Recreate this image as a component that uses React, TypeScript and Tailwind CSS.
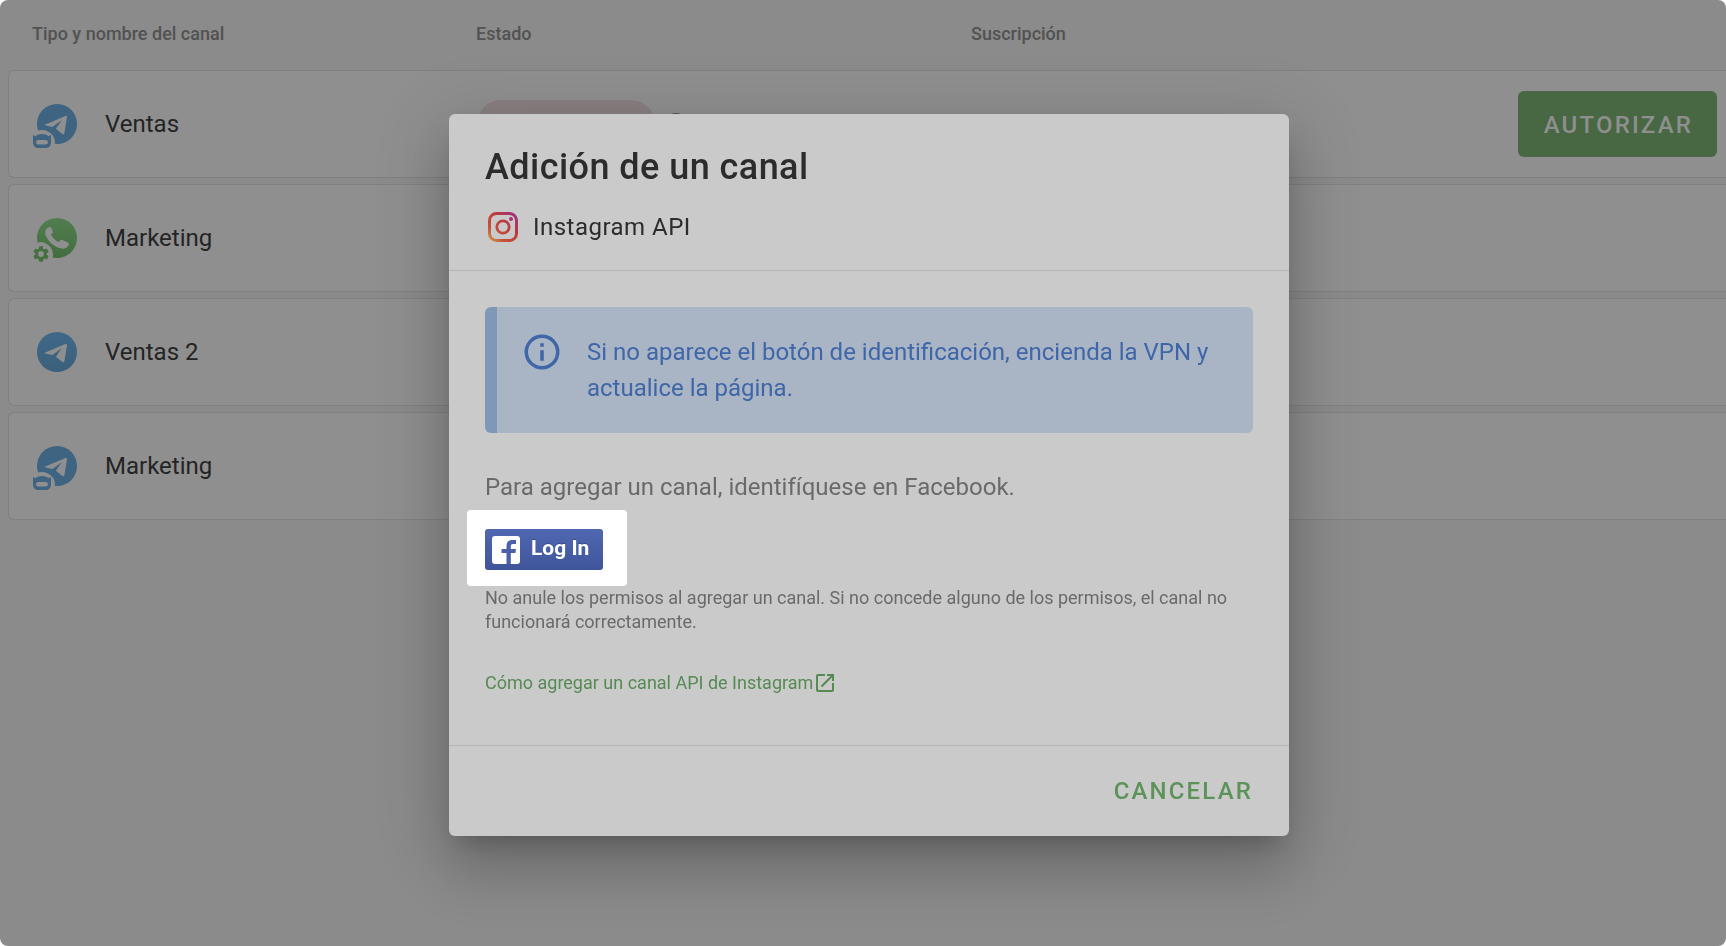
import React from "react";

const channels = [
  { name: "Ventas", icon: "telegram", badge: "bot" },
  { name: "Marketing", icon: "whatsapp", badge: "gear" },
  { name: "Ventas 2", icon: "telegram", badge: "" },
  { name: "Marketing", icon: "telegram", badge: "bot" },
];

function ChannelIcon({ icon, badge }: { icon: string; badge: string }) {
  const green = icon === "whatsapp";
  return (
    <svg className="h-12 w-12 shrink-0" viewBox="0 0 48 48" aria-hidden="true">
      <defs>
        <linearGradient id="tg" x1="0" y1="0" x2="0" y2="1">
          <stop offset="0" stopColor="#3f6888" />
          <stop offset="1" stopColor="#3c607b" />
        </linearGradient>
        <linearGradient id="wa" x1="0" y1="0" x2="0" y2="1">
          <stop offset="0" stopColor="#527d4f" />
          <stop offset="1" stopColor="#426e3f" />
        </linearGradient>
      </defs>
      <circle cx="25" cy="24" r="20" fill={green ? "url(#wa)" : badge ? "#3e6482" : "url(#tg)"} />
      {green ? (
        <path
          d="M16.5 13.4c1-.6 2.300-.5 2.800.7l1.400 3.300c.3.800.1 1.400-.5 2l-1.200 1.400c1.700 3.400 4.300 5.800 7.700 7.300l1.800-1.800c.5-.5 1.100-.6 1.800-.3l5.600 2.500c1.100.5 1.300 1.400.8 2.500-1.500 3.200-4.900 4.300-8.200 3.300-7-2.200-12.200-6.600-14.800-13.100-1.200-3.200-.6-5.800 2.800-7.800z"
          fill="#8f8f8f"
        />
      ) : (
        <path
          d="M13.300 24.500 33.500 16c1-.4 1.700.2 1.500 1.300l-2.600 15.800c-.2 1.300-1 1.600-2 .9l-6.500-5.200 5.800-8.500-9.400 6.700-6.800-1.600c-.8-.2-.9-.6-.2-.9z"
          fill="#8f8f8f"
        />
      )}
      {badge === "bot" && (
        <>
          <circle cx="10" cy="43" r="13" fill="#8f8f8f" />
          <path
            fillRule="evenodd"
            d="M1 35l2.500 1.300C6.500 33.300 13.500 33.300 16.500 36.300L19 35v7.500c0 3.500-2 5.500-6 5.500H7c-4 0-6-2-6-5.500zM6.300 40a2.300 2.300 0 0 0 0 4.600h7.400a2.300 2.300 0 0 0 0-4.600z"
            fill="#3e6482"
          />
        </>
      )}
      {badge === "gear" && (
        <>
          <circle cx="8" cy="41" r="13" fill="#8f8f8f" />
          <g transform="translate(-.6 30.400) scale(.8)" fill="#44703f">
            <path d="M19.140 12.940c.040-.3.060-.610.060-.940s-.020-.640-.070-.940l2.030-1.580c.18-.14.23-.41.12-.61l-1.920-3.320c-.12-.22-.37-.29-.59-.22l-2.390.96c-.5-.38-1.030-.7-1.620-.94l-.36-2.540c-.04-.24-.24-.41-.48-.41h-3.840c-.24 0-.43.17-.47.41l-.36 2.540c-.59.24-1.130.57-1.620.94l-2.390-.96c-.22-.08-.47 0-.59.22L2.740 8.870c-.12.21-.08.47.12.61l2.030 1.580c-.05.3-.09.63-.09.94s.02.64.07.94l-2.030 1.580c-.18.14-.23.41-.12.61l1.920 3.320c.12.22.37.29.59.22l2.390-.96c.5.38 1.030.7 1.620.94l.36 2.540c.05.24.24.41.48.41h3.840c.24 0 .44-.17.47-.41l.36-2.540c.59-.24 1.130-.56 1.620-.94l2.390.96c.22.08.47 0 .59-.22l1.920-3.320c.12-.22.07-.47-.12-.61zM12 15.600A3.600 3.600 0 1 1 12 8.400a3.600 3.600 0 0 1 0 7.200z" />
          </g>
        </>
      )}
    </svg>
  );
}

function InstagramIcon() {
  return (
    <svg className="h-9 w-9" viewBox="0 0 36 36" fill="none" aria-hidden="true">
      <defs>
        <linearGradient id="ig" x1="4" y1="33" x2="32" y2="3" gradientUnits="userSpaceOnUse">
          <stop stopColor="#c99d45" />
          <stop offset=".28" stopColor="#c5503a" />
          <stop offset=".6" stopColor="#bd3c3d" />
          <stop offset="1" stopColor="#97308a" />
        </linearGradient>
      </defs>
      <rect x="4.500" y="4.500" width="27" height="27" rx="7" stroke="url(#ig)" strokeWidth="3" />
      <circle cx="18" cy="18" r="6.200" stroke="url(#ig)" strokeWidth="2.800" />
      <circle cx="26" cy="10" r="2" fill="#a8326c" />
    </svg>
  );
}

function FacebookLogin() {
  return (
    <button
      type="button"
      className="flex h-[41px] w-[118px] items-center gap-2.5 rounded-[3px] bg-linear-to-b from-[#5068b2] to-[#3f549a] pl-1.5 text-[21px] font-bold text-white"
    >
      <svg className="h-[30px] w-[30px]" viewBox="0 0 30 30" aria-hidden="true">
        <rect x="1" y="1" width="28" height="28" rx="3" fill="#fff" />
        <path
          d="M15.500 29V18h-5v-4h5v-3c0-4 2-6 6-6H25v4h-3c-1.500 0-2.200.8-2.200 2.200V14H25l-.6 4h-4.600v11z"
          fill="#4a60a8"
        />
      </svg>
      <span className="pb-0.5 [text-shadow:0_-1px_0_#354c8c]">Log In</span>
    </button>
  );
}

function AddChannelDialog() {
  return (
    <div
      role="dialog"
      aria-labelledby="dialog-title"
      className="w-[840px] max-w-full rounded-md bg-[#cacaca] text-[#2c2c2c] shadow-[0_16px_23px_-10px_rgba(0,0,0,0.2),0_36px_57px_4px_rgba(0,0,0,0.14),0_13px_69px_12px_rgba(0,0,0,0.12)]"
    >
      <header className="border-b border-[#b5b5b5] px-9 pt-8 pb-[25px]">
        <h2 id="dialog-title" className="text-4xl leading-[42px] font-medium tracking-[0.0125em]">
          Adición de un canal
        </h2>
        <div className="mt-[21px] flex items-center gap-3">
          <InstagramIcon />
          <span className="text-2xl tracking-[0.02em]">Instagram API</span>
        </div>
      </header>

      <div className="px-9 pt-9 pb-[50px] text-[#6a6a6a]">
        <div className="flex gap-6 rounded-md border-l-12 border-[#8098b8] bg-[#a9b5c4] p-6 text-[#3e66a8]">
          <svg className="h-[42px] w-[42px] shrink-0" viewBox="0 0 24 24" fill="currentColor" aria-hidden="true">
            <path d="M11 9h2V7h-2m1 13c-4.410 0-8-3.590-8-8s3.590-8 8-8 8 3.590 8 8-3.590 8-8 8m0-18A10 10 0 0 0 2 12a10 10 0 0 0 10 10 10 10 0 0 0 10-10A10 10 0 0 0 12 2m-1 15h2v-6h-2v6z" />
          </svg>
          <p className="py-[3px] text-2xl leading-9">
            Si no aparece el botón de identificación, encienda la VPN y actualice la página.
          </p>
        </div>
        <p className="mt-9 text-2xl leading-9">Para agregar un canal, identifíquese en Facebook.</p>
        <div className="mt-[5px] -ml-[18px] w-fit rounded bg-white pt-[19px] pr-6 pb-4 pl-[18px]">
          <FacebookLogin />
        </div>
        <p className="text-lg leading-6">
          No anule los permisos al agregar un canal. Si no concede alguno de los permisos, el canal no
          funcionará correctamente.
        </p>
        <a href="#ayuda" className="mt-[37px] flex items-center text-lg leading-6 text-[#568a53]">
          Cómo agregar un canal API de Instagram
          <svg className="h-6 w-6" viewBox="0 0 24 24" fill="currentColor" aria-hidden="true">
            <path d="M14 3v2h3.590l-9.830 9.830 1.410 1.410L19 6.410V10h2V3m-2 16H5V5h7V3H5a2 2 0 0 0-2 2v14a2 2 0 0 0 2 2h14a2 2 0 0 0 2-2v-7h-2v7z" />
          </svg>
        </a>
      </div>

      <footer className="flex justify-end border-t border-[#b5b5b5] px-9 py-[27px]">
        <button type="button" className="text-2xl leading-9 font-medium tracking-[0.09em] text-[#5c9359]">
          CANCELAR
        </button>
      </footer>
    </div>
  );
}

export default function App() {
  return (
    <div className="min-h-screen bg-white font-['Roboto',sans-serif]">
      <main className="min-h-screen overflow-hidden rounded-lg bg-[#8b8b8b] pl-2 text-[#242424]">
        <div className="flex h-[70px] items-center pb-0.5 pl-6 text-lg font-medium text-[#525252]">
          <span className="w-[444px]">Tipo y nombre del canal</span>
          <span className="w-[495px]">Estado</span>
          <span>Suscripción</span>
        </div>
        <ul className="flex flex-col gap-1.5">
          {channels.map((channel, i) => (
            <li
              key={i}
              className="flex h-[108px] items-center rounded-l-md border border-r-0 border-[#808080] bg-[#8f8f8f] pr-[9px] pl-[23px]"
            >
              <div className="flex w-[445px] items-center gap-[25px]">
                <ChannelIcon icon={channel.icon} badge={channel.badge} />
                <span className="text-2xl">{channel.name}</span>
              </div>
              {i === 0 && (
                <>
                  <span className="h-12 w-[178px] rounded-full bg-[#897f80]" />
                  <span className="ml-2.5 h-[22px] w-[22px] rounded-full border-2 border-[#525252]" />
                  <button
                    type="button"
                    className="ml-auto h-[66px] rounded-md bg-[#486843] pt-0.5 pr-6 pl-[26px] text-2xl font-medium tracking-[0.09em] text-[#8f8f8f]"
                  >
                    AUTORIZAR
                  </button>
                </>
              )}
            </li>
          ))}
        </ul>
      </main>
      <div className="fixed inset-0 flex items-center justify-center pt-1 pl-3">
        <AddChannelDialog />
      </div>
    </div>
  );
}
